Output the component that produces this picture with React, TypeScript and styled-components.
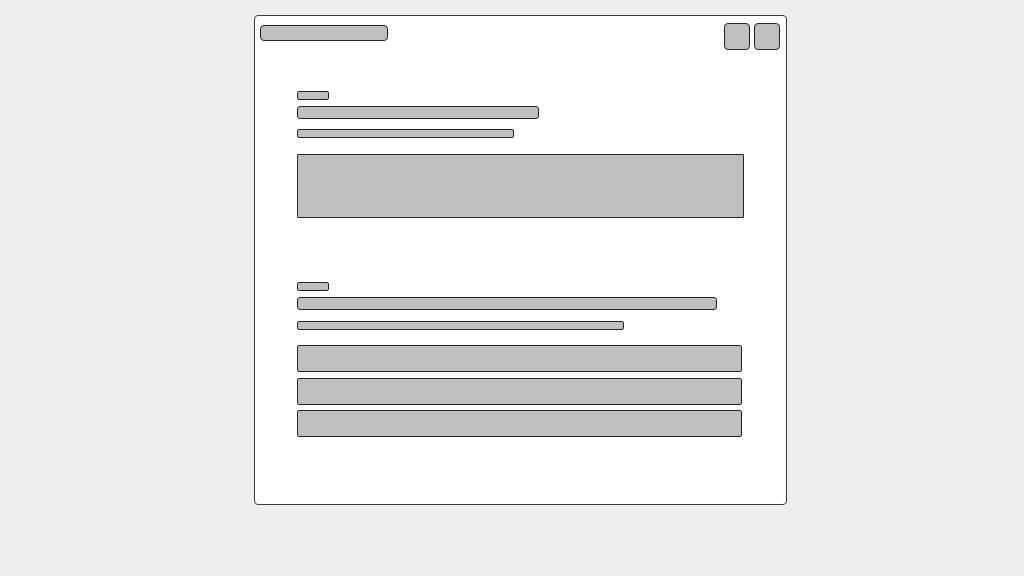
import React from 'react';
import styled, { createGlobalStyle } from 'styled-components';

const GlobalStyle = createGlobalStyle`
  html, body {
    margin: 0;
    padding: 0;
    background: #eeeeee;
    font-family: "Liberation Sans", Arial, sans-serif;
  }
`;

const Page = styled.div`
  width: 1024px;
  height: 576px;
  display: flex;
  justify-content: flex-start;
  padding: 15px 0 0 254px;
  box-sizing: border-box;
`;

const Frame = styled.div`
  width: 533px;
  height: 490px;
  box-sizing: border-box;
  background: #ffffff;
  border: 1px solid #3a3a3a;
  border-radius: 4px;
  display: flex;
  flex-direction: column;
`;

const Header = styled.div`
  display: flex;
  justify-content: space-between;
  align-items: flex-start;
  padding: 7px 6px 0 5px;
`;

const TitleBar = styled.div`
  width: 128px;
  height: 16px;
  margin-top: 2px;
  box-sizing: border-box;
  background: #bfbfbf;
  border: 1px solid #222;
  border-radius: 4px;
`;

const Actions = styled.div`
  display: flex;
  gap: 4px;
`;

const IconButton = styled.div`
  width: 26px;
  height: 27px;
  box-sizing: border-box;
  background: #bfbfbf;
  border: 1px solid #222;
  border-radius: 4px;
`;

const Content = styled.div`
  display: flex;
  flex-direction: column;
  gap: 64px;
  padding: 41px 41px 0 42px;
`;

const Section = styled.div`
  display: flex;
  flex-direction: column;
`;

const Bar = styled.div<{ $w: number; $h: number; $mt?: number; $r?: number }>`
  width: ${(p) => p.$w}px;
  height: ${(p) => p.$h}px;
  margin-top: ${(p) => p.$mt ?? 0}px;
  box-sizing: border-box;
  background: #bfbfbf;
  border: 1px solid #222;
  border-radius: ${(p) => p.$r ?? 2}px;
`;

const Rows = styled.div`
  display: flex;
  flex-direction: column;
  gap: 5.5px;
  margin-top: 15px;
`;

const App: React.FC = (): JSX.Element => {
  return (
    <>
      <GlobalStyle />
      <Page>
        <Frame>
          <Header>
            <TitleBar />
            <Actions>
              <IconButton />
              <IconButton />
            </Actions>
          </Header>
          <Content>
            <Section>
              <Bar $w={32} $h={9} />
              <Bar $w={242} $h={13} $mt={6} $r={3} />
              <Bar $w={217} $h={9} $mt={10} />
              <Bar $w={447} $h={64} $mt={16} $r={1} />
            </Section>
            <Section>
              <Bar $w={32} $h={9} />
              <Bar $w={420} $h={13} $mt={6} $r={3} />
              <Bar $w={327} $h={9} $mt={11} />
              <Rows>
                <Bar $w={445} $h={27} $r={2} />
                <Bar $w={445} $h={27} $r={2} />
                <Bar $w={445} $h={27} $r={2} />
              </Rows>
            </Section>
          </Content>
        </Frame>
      </Page>
    </>
  );
};

export default App;
